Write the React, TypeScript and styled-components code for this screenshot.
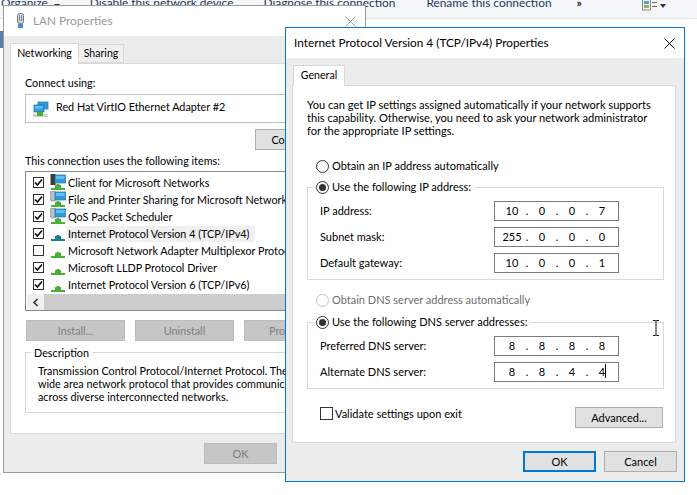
import styled, { createGlobalStyle } from "styled-components";

const GlobalStyle = createGlobalStyle`
  html, body {
    margin: 0;
    padding: 0;
    background: #fff;
  }
  body {
    font-family: Lato, "Noto Sans", sans-serif;
    font-size: 11px;
    color: #000;
  }
`;

const SEL = "#0078d7";

const Desktop = styled.div`
  position: relative;
  width: 697px;
  height: 495px;
  overflow: hidden;
  background: #fff;
`;

/* explorer toolbar behind the dialogs */
const Toolbar = styled.div`
  display: flex;
  align-items: flex-end;
  height: 19px;
  padding: 0 0 9px 1px;
  box-sizing: border-box;
  background: #f5f6f7;
  border-bottom: 1px solid #e6e6e6;
  color: #1e395b;
  font-size: 11.9px;
  line-height: 12px;
  white-space: nowrap;
`;

const ToolItem = styled.span<{ $left?: number }>`
  margin-left: ${(p) => p.$left ?? 30}px;
`;

const MoreMark = styled(ToolItem)`
  font-weight: 700;
  color: #222;
`;

const Caret = styled.span<{ $left: number }>`
  width: 0;
  height: 0;
  margin-left: ${(p) => p.$left}px;
  margin-bottom: 1px;
  border-left: 3.5px solid transparent;
  border-right: 3.5px solid transparent;
  border-top: 4px solid #1e395b;
`;

const ViewIcon = styled.svg`
  position: absolute;
  left: 642px;
  top: 0;
`;

const SideMark = styled.div`
  position: absolute;
  left: 0;
  top: 31px;
  width: 3px;
  height: 17px;
  background: #5b7fa8;
`;

const Win = styled.div<{ $x: number; $y: number; $w: number; $h: number; $active?: boolean }>`
  position: absolute;
  left: ${(p) => p.$x}px;
  top: ${(p) => p.$y}px;
  width: ${(p) => p.$w}px;
  height: ${(p) => p.$h}px;
  box-sizing: border-box;
  display: flex;
  flex-direction: column;
  background: #ececec;
  border: 1px solid ${(p) => (p.$active ? SEL : "#9b9b9b")};
`;

const TitleBar = styled.div<{ $active?: boolean }>`
  display: flex;
  align-items: center;
  flex: none;
  height: 30px;
  background: #fff;
  padding: 0 9px 0 ${(p) => (p.$active ? 8 : 12)}px;
  gap: 8px;
  color: ${(p) => (p.$active ? "#000" : "#999")};
  font-size: 11.8px;
`;

const TitleText = styled.span`
  flex: 1;
  margin-top: -2px;
  white-space: nowrap;
`;

const Tabs = styled.div<{ $left: number }>`
  display: flex;
  align-items: flex-end;
  flex: none;
  height: 21px;
  margin: 6px 0 0 ${(p) => p.$left}px;
  position: relative;
  z-index: 1;
`;

const Tab = styled.div<{ $on?: boolean; $w: number }>`
  box-sizing: border-box;
  width: ${(p) => p.$w}px;
  height: ${(p) => (p.$on ? 21 : 19)}px;
  margin-bottom: ${(p) => (p.$on ? -1 : 0)}px;
  padding-bottom: 2px;
  display: flex;
  align-items: center;
  justify-content: center;
  font-size: 10.6px;
  background: ${(p) => (p.$on ? "#fff" : "#f0f0f0")};
  border: 1px solid #d9d9d9;
  border-bottom: ${(p) => (p.$on ? "none" : "1px solid #d9d9d9")};
  border-left: ${(p) => (p.$on ? "1px solid #d9d9d9" : "none")};
`;

const Panel = styled.div<{ $x: number; $w: number; $h: number }>`
  box-sizing: border-box;
  flex: none;
  margin-left: ${(p) => p.$x}px;
  width: ${(p) => p.$w}px;
  height: ${(p) => p.$h}px;
  background: #fff;
  border: 1px solid #d9d9d9;
`;

const Footer = styled.div<{ $gap: number; $right: number; $top: number }>`
  display: flex;
  justify-content: flex-end;
  gap: ${(p) => p.$gap}px;
  padding: ${(p) => p.$top}px ${(p) => p.$right}px 0 0;
`;

const Btn = styled.div<{ $w: number; $default?: boolean; $off?: boolean }>`
  box-sizing: border-box;
  flex: none;
  width: ${(p) => p.$w}px;
  height: 21px;
  display: flex;
  align-items: center;
  justify-content: center;
  background: ${(p) => (p.$off ? "#c6c6c6" : "#e1e1e1")};
  color: ${(p) => (p.$off ? "#7f7f7f" : "#000")};
  border: ${(p) =>
    p.$default ? `2px solid ${SEL}` : p.$off ? "1px solid #bcbcbc" : "1px solid #adadad"};
`;

/* LAN Properties body */
const LanBody = styled.div`
  padding: 12px 14px 0 14px;
  box-sizing: border-box;
  height: 100%;
  display: flex;
  flex-direction: column;
  font-size: 10.8px;
`;

const Label = styled.div<{ $top?: number }>`
  height: 14px;
  line-height: 13px;
  margin-top: ${(p) => p.$top ?? 0}px;
  white-space: nowrap;
`;

const AdapterBox = styled.div`
  display: flex;
  align-items: center;
  gap: 7px;
  box-sizing: border-box;
  height: 29px;
  margin-top: 4px;
  padding-left: 7px;
  border: 1px solid #bdbdbd;
  white-space: nowrap;
`;

const AdapterName = styled.span`
  margin-top: -5px;
`;

const ConfigRow = styled.div`
  display: flex;
  justify-content: flex-end;
  margin-top: 6px;
`;

const ItemList = styled.div`
  box-sizing: border-box;
  height: 140px;
  margin-top: 3px;
  padding-top: 2px;
  border: 1px solid #828790;
  display: flex;
  flex-direction: column;
`;

const ItemRow = styled.div`
  display: flex;
  align-items: center;
  height: 17px;
  flex: none;
  padding-left: 7px;
  white-space: nowrap;
`;

const ItemText = styled.span<{ $sel?: boolean }>`
  margin-left: 0;
  padding: 0 6px 0 2px;
  line-height: 16px;
  background: ${(p) => (p.$sel ? "#f0f0f0" : "transparent")};
`;

const Check = styled.span<{ $size?: number }>`
  box-sizing: border-box;
  flex: none;
  width: ${(p) => p.$size ?? 11}px;
  height: ${(p) => p.$size ?? 11}px;
  border: 1px solid #333;
  background: #fff;
  display: flex;
  align-items: center;
  justify-content: center;
`;

const ItemIconWrap = styled.span`
  display: flex;
  margin-left: 6px;
`;

const Scrollbar = styled.div`
  display: flex;
  height: 16px;
  margin-top: 1px;
  margin-left: 1px;
  background: #f0f0f0;
`;

const ScrollBtn = styled.div`
  width: 17px;
  display: flex;
  align-items: center;
  justify-content: center;
`;

const ScrollThumb = styled.div`
  flex: 1;
  margin-right: 30px;
  background: #cdcdcd;
`;

const ButtonRow = styled.div`
  display: flex;
  gap: 10px;
  margin: 9px 0 0 1px;
`;

const DescBox = styled.fieldset`
  margin: 4px 0 0;
  padding: 4px 10px 0 12px;
  height: 68px;
  box-sizing: border-box;
  border: 1px solid #d9d9d9;
  min-width: 0;
`;

const DescLegend = styled.legend`
  padding: 0 3px;
  margin-left: -7px;
  line-height: 15px;
`;

const DescText = styled.div`
  line-height: 13px;
  white-space: nowrap;
`;

/* IPv4 body */
const Ipv4Body = styled.div`
  box-sizing: border-box;
  height: 100%;
  padding: 12px 11px 0 14px;
  display: flex;
  flex-direction: column;
`;

const Intro = styled.div`
  line-height: 13px;
  white-space: nowrap;
  font-size: 11.1px;
  margin-bottom: 1px;
`;

const RadioRow = styled.div<{ $top?: number; $off?: boolean }>`
  display: flex;
  align-items: center;
  gap: 3px;
  height: 16px;
  margin-top: ${(p) => p.$top ?? 0}px;
  margin-left: 9px;
  color: ${(p) => (p.$off ? "#6d6d6d" : "#000")};
  white-space: nowrap;
`;

const RadioText = styled.span`
  margin-top: -2px;
`;

const RadioDot = styled.span<{ $on?: boolean; $off?: boolean }>`
  box-sizing: border-box;
  flex: none;
  width: 13px;
  height: 13px;
  border-radius: 50%;
  border: 1px solid ${(p) => (p.$off ? "#c4c4c4" : "#333")};
  background: #fff;
  display: flex;
  align-items: center;
  justify-content: center;
  &::after {
    content: "";
    display: ${(p) => (p.$on ? "block" : "none")};
    width: 7px;
    height: 7px;
    border-radius: 50%;
    background: #333;
  }
`;

const Group = styled.fieldset<{ $top: number }>`
  margin: ${(p) => p.$top}px 0 0;
  padding: 6px 0 6px 12px;
  border: 1px solid #d9d9d9;
  min-width: 0;
  display: flex;
  flex-direction: column;
  gap: 6px;
`;

const GroupLegend = styled.legend`
  padding: 0 3px 0 0;
  margin-left: -4px;
`;

const LegendRow = styled(RadioRow)`
  margin: 0;
`;

const FieldRow = styled.div`
  display: flex;
  align-items: center;
  height: 20px;
`;

const FieldLabel = styled.span`
  width: 174px;
  margin-top: -2px;
  white-space: nowrap;
`;

const IpBox = styled.div`
  box-sizing: border-box;
  width: 125px;
  height: 20px;
  padding: 0 0 2px 6px;
  border: 1px solid #7a7a7a;
  display: flex;
  align-items: center;
  position: relative;
`;

const Octet = styled.span`
  width: 22px;
  text-align: center;
`;

const Dot = styled.span`
  width: 8px;
  text-align: center;
`;

const TextCaret = styled.span`
  position: absolute;
  left: 110px;
  top: 1px;
  width: 1px;
  height: 14px;
  background: #000;
`;

const BottomRow = styled.div`
  display: flex;
  justify-content: space-between;
  margin-top: 18px;
  padding-right: 1px;
`;

const ValidateRow = styled.div`
  display: flex;
  align-items: center;
  gap: 2px;
  height: 14px;
  margin: -1px 0 0 13px;
  white-space: nowrap;
`;

const IBeam = styled.svg`
  position: absolute;
  left: 652px;
  top: 320px;
`;

const CheckMark = () => (
  <svg width="9" height="9" viewBox="0 0 9 9">
    <path d="M1 4.5 L3.4 7 L8 1.5" fill="none" stroke="#111" strokeWidth="1.7" />
  </svg>
);

const CloseX = ({ color, size }: { color: string; size: number }) => (
  <svg width={size} height={size} viewBox="0 0 11 11" style={{ flex: "none" }}>
    <path d="M0.5 0.5 L10.5 10.5 M10.5 0.5 L0.5 10.5" stroke={color} strokeWidth="1" />
  </svg>
);

const Monitor = ({ x, y }: { x: number; y: number }) => (
  <g>
    <rect x={x} y={y} width="10.5" height="8" fill="#2f9be0" stroke="#1f6fa8" strokeWidth="0.7" />
    <rect x={x + 1} y={y + 1} width="8.5" height="3" fill="#63c1f2" />
  </g>
);

// the stepped connector under every network item
const Base = ({ color }: { color: string }) => (
  <g>
    <rect x="6.5" y="10" width="3" height="1" fill={color} />
    <rect x="5" y="11" width="6" height="3" fill={color} />
    <rect x="1" y="14" width="14" height="2" fill={color} />
  </g>
);

const AdapterIcon = () => (
  <svg width="16" height="16" viewBox="0 0 16 16" style={{ flex: "none" }}>
    <rect x="5" y="1" width="10" height="7" fill="#2f9be0" stroke="#1f6fa8" strokeWidth="0.7" />
    <rect x="1" y="4" width="10" height="7" fill="#2f9be0" stroke="#1f6fa8" strokeWidth="0.7" />
    <rect x="2" y="5" width="8" height="2.5" fill="#63c1f2" />
    <rect x="0" y="13" width="15" height="3" fill="#cfd3cf" />
    <rect x="4" y="11" width="6" height="4" fill="#4caf35" />
  </svg>
);

const ItemIcon = ({ kind }: { kind: "client" | "service" | "proto" | "sel" }) => (
  <svg width="16" height="17" viewBox="0 0 16 17" style={{ flex: "none" }}>
    {kind === "client" && <rect x="0.5" y="-1" width="5" height="12" fill="#3b3b3b" />}
    {kind === "service" && (
      <path
        d="M1 0 H5 V1 H6 V9 H5 V10 H1 V9 H0 V1 H1 Z"
        fill="#b9bfc4"
        stroke="#7c8388"
        strokeWidth="0.6"
      />
    )}
    {(kind === "client" || kind === "service") && <Monitor x={5} y={1} />}
    <Base color={kind === "sel" ? "#1f7f93" : "#4caf35"} />
  </svg>
);

const LanIcon = () => (
  <svg width="9" height="16" viewBox="0 0 9 16" style={{ flex: "none" }}>
    <rect x="1.5" y="0.5" width="6" height="10" rx="2" fill="#d3d8dc" stroke="#6d7880" />
    <rect x="3" y="2" width="1" height="6" fill="#7d8890" />
    <rect x="5" y="2" width="1" height="6" fill="#7d8890" />
    <rect x="2" y="11" width="5" height="4" fill="#3f8fd0" />
  </svg>
);

const items: { text: string; on: boolean; kind: "client" | "service" | "proto" | "sel" }[] = [
  { text: "Client for Microsoft Networks", on: true, kind: "client" },
  { text: "File and Printer Sharing for Microsoft Networks", on: true, kind: "service" },
  { text: "QoS Packet Scheduler", on: true, kind: "service" },
  { text: "Internet Protocol Version 4 (TCP/IPv4)", on: true, kind: "sel" },
  { text: "Microsoft Network Adapter Multiplexor Protocol", on: false, kind: "proto" },
  { text: "Microsoft LLDP Protocol Driver", on: true, kind: "proto" },
  { text: "Internet Protocol Version 6 (TCP/IPv6)", on: true, kind: "proto" },
];

function IpField({ parts, caret }: { parts: string[]; caret?: boolean }) {
  return (
    <IpBox>
      <Octet>{parts[0]}</Octet>
      <Dot>.</Dot>
      <Octet>{parts[1]}</Octet>
      <Dot>.</Dot>
      <Octet>{parts[2]}</Octet>
      <Dot>.</Dot>
      <Octet>{parts[3]}</Octet>
      {caret && <TextCaret />}
    </IpBox>
  );
}

export default function App() {
  return (
    <Desktop>
      <GlobalStyle />
      <Toolbar>
        <ToolItem $left={0}>Organize</ToolItem>
        <Caret $left={6} />
        <ToolItem $left={30}>Disable this network device</ToolItem>
        <ToolItem $left={30}>Diagnose this connection</ToolItem>
        <ToolItem $left={31}>Rename this connection</ToolItem>
        <MoreMark $left={25}>»</MoreMark>
        <Caret $left={78} />
      </Toolbar>
      <ViewIcon width="16" height="11" viewBox="0 0 16 11">
        <rect x="0.5" y="-2" width="8" height="12" fill="#f4f4f4" stroke="#8a8a8a" />
        <rect x="2" y="1" width="5" height="3" fill="#5a9bd5" />
        <rect x="2" y="5" width="5" height="3" fill="#8fb35a" />
        <path d="M10 2.5 H15 M10 6.5 H15" stroke="#6a6a6a" />
      </ViewIcon>
      <SideMark />

      <Win $x={3} $y={5} $w={363} $h={468}>
        <TitleBar>
          <LanIcon />
          <TitleText>LAN Properties</TitleText>
          <CloseX color="#999" size={11} />
        </TitleBar>
        <Tabs $left={6}>
          <Tab $on $w={69}>Networking</Tab>
          <Tab $w={45}>Sharing</Tab>
        </Tabs>
        <Panel $x={6} $w={347} $h={371}>
          <LanBody>
            <Label>Connect using:</Label>
            <AdapterBox>
              <AdapterIcon />
              <AdapterName>Red Hat VirtIO Ethernet Adapter #2</AdapterName>
            </AdapterBox>
            <ConfigRow>
              <Btn $w={87}>Configure...</Btn>
            </ConfigRow>
            <Label $top={4}>This connection uses the following items:</Label>
            <ItemList>
              {items.map((it) => (
                <ItemRow key={it.text}>
                  <Check>{it.on && <CheckMark />}</Check>
                  <ItemIconWrap>
                    <ItemIcon kind={it.kind} />
                  </ItemIconWrap>
                  <ItemText $sel={it.kind === "sel"}>{it.text}</ItemText>
                </ItemRow>
              ))}
              <Scrollbar>
                <ScrollBtn>
                  <svg width="7" height="9" viewBox="0 0 7 9">
                    <path d="M5.5 1 L2 4.5 L5.5 8" fill="none" stroke="#333" strokeWidth="1.6" />
                  </svg>
                </ScrollBtn>
                <ScrollThumb />
              </Scrollbar>
            </ItemList>
            <ButtonRow>
              <Btn $w={99} $off>Install...</Btn>
              <Btn $w={99} $off>Uninstall</Btn>
              <Btn $w={99} $off>Properties</Btn>
            </ButtonRow>
            <DescBox>
              <DescLegend>Description</DescLegend>
              <DescText>
                Transmission Control Protocol/Internet Protocol. The default
                <br />
                wide area network protocol that provides communication
                <br />
                across diverse interconnected networks.
              </DescText>
            </DescBox>
          </LanBody>
        </Panel>
        <Footer $gap={6} $right={88} $top={9}>
          <Btn $w={73} $off>OK</Btn>
        </Footer>
      </Win>

      <Win $x={285} $y={27} $w={400} $h={455} $active>
        <TitleBar $active>
          <TitleText>Internet Protocol Version 4 (TCP/IPv4) Properties</TitleText>
          <CloseX color="#000" size={11} />
        </TitleBar>
        <Tabs $left={7}>
          <Tab $on $w={52}>General</Tab>
        </Tabs>
        <Panel $x={6} $w={384} $h={358}>
          <Ipv4Body>
            <Intro>
              You can get IP settings assigned automatically if your network supports
              <br />
              this capability. Otherwise, you need to ask your network administrator
              <br />
              for the appropriate IP settings.
            </Intro>
            <RadioRow $top={20}>
              <RadioDot />
              <RadioText>Obtain an IP address automatically</RadioText>
            </RadioRow>
            <Group $top={5}>
              <GroupLegend>
                <LegendRow>
                  <RadioDot $on />
                  <RadioText>Use the following IP address:</RadioText>
                </LegendRow>
              </GroupLegend>
              <FieldRow>
                <FieldLabel>IP address:</FieldLabel>
                <IpField parts={["10", "0", "0", "7"]} />
              </FieldRow>
              <FieldRow>
                <FieldLabel>Subnet mask:</FieldLabel>
                <IpField parts={["255", "0", "0", "0"]} />
              </FieldRow>
              <FieldRow>
                <FieldLabel>Default gateway:</FieldLabel>
                <IpField parts={["10", "0", "0", "1"]} />
              </FieldRow>
            </Group>
            <RadioRow $top={12} $off>
              <RadioDot $off />
              <RadioText>Obtain DNS server address automatically</RadioText>
            </RadioRow>
            <Group $top={6}>
              <GroupLegend>
                <LegendRow>
                  <RadioDot $on />
                  <RadioText>Use the following DNS server addresses:</RadioText>
                </LegendRow>
              </GroupLegend>
              <FieldRow>
                <FieldLabel>Preferred DNS server:</FieldLabel>
                <IpField parts={["8", "8", "8", "8"]} />
              </FieldRow>
              <FieldRow>
                <FieldLabel>Alternate DNS server:</FieldLabel>
                <IpField parts={["8", "8", "4", "4"]} caret />
              </FieldRow>
            </Group>
            <BottomRow>
              <ValidateRow>
                <Check $size={13} />
                Validate settings upon exit
              </ValidateRow>
              <Btn $w={88}>Advanced...</Btn>
            </BottomRow>
          </Ipv4Body>
        </Panel>
        <Footer $gap={8} $right={7} $top={8}>
          <Btn $w={73} $default>OK</Btn>
          <Btn $w={73}>Cancel</Btn>
        </Footer>
      </Win>

      <IBeam width="8" height="16" viewBox="0 0 8 16">
        <path d="M1 0.5 H3.5 L4 1 L4.5 0.5 H7 M4 1 V15 M1 15.5 H3.5 L4 15 L4.5 15.5 H7" fill="none" stroke="#111" />
      </IBeam>
    </Desktop>
  );
}
